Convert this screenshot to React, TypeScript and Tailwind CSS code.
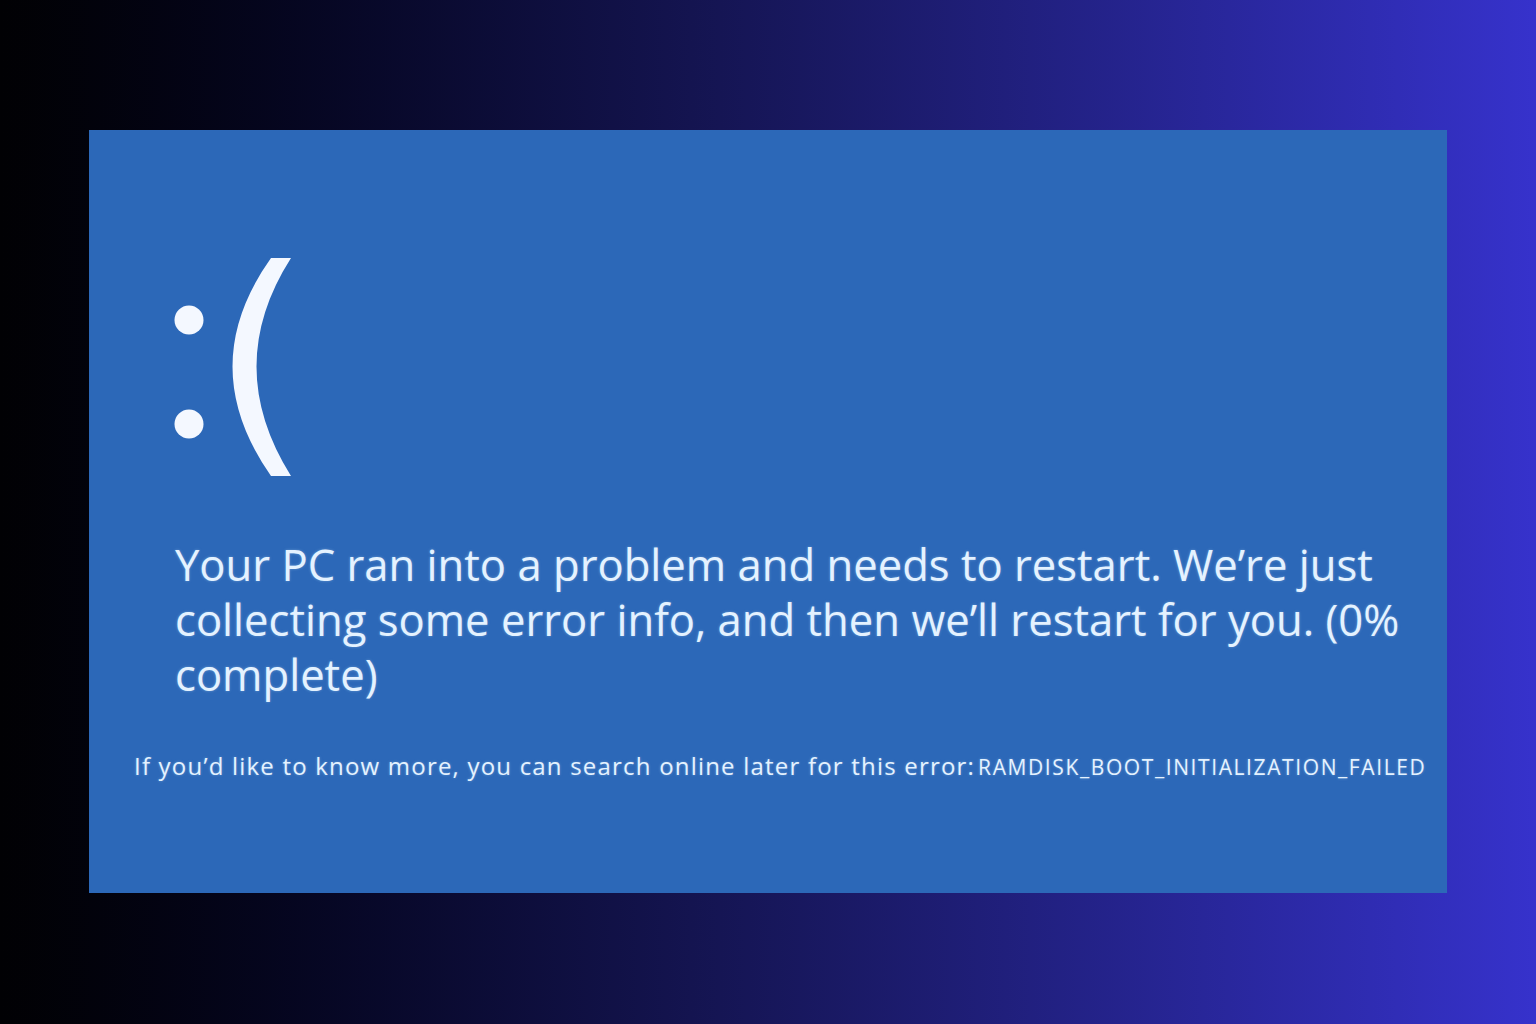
export default function App() {
  return (
    <div className="h-[1024px] w-[1536px] overflow-hidden bg-gradient-to-r from-[#010104] via-[#141450] via-45% to-[#3632cc] pl-[89px] pt-[130px]">
      <div
        className="h-[763px] w-[1358px] bg-[#2c68b8] text-[#e4f2ff]"
        style={{ fontFamily: '"Open Sans", "Noto Sans", sans-serif' }}
      >
        <div className="pl-[71px] pt-[128px]">
          <svg className="block" width="140" height="222" viewBox="0 0 140 222" fill="#f4f8ff">
            <circle cx="29" cy="62" r="14.5" />
            <circle cx="29" cy="166" r="14.5" />
            <path d="M111 0 L131 0 Q62 108 131 218 L111 218 Q34 108 111 0 Z" />
          </svg>
        </div>
        <p className="mt-[57px] pl-[86px] pr-[20px] text-[43.6px] leading-[55px] [text-shadow:0_0_3px_rgba(200,235,255,0.35)]">
          Your PC ran into a problem and needs to restart. We’re just collecting some error info, and then we’ll restart for you. (0% complete)
        </p>
        <div className="mt-[49px] flex items-baseline pl-[45px] leading-[30px] [text-shadow:0_0_3px_rgba(200,235,255,0.35)]">
          <span className="text-[24px] tracking-[1.2px]">If you’d like to know more, you can search online later for this error:</span>
          <span className="ml-[3px] text-[21px] tracking-[1.6px]">RAMDISK_BOOT_INITIALIZATION_FAILED</span>
        </div>
      </div>
    </div>
  );
}
